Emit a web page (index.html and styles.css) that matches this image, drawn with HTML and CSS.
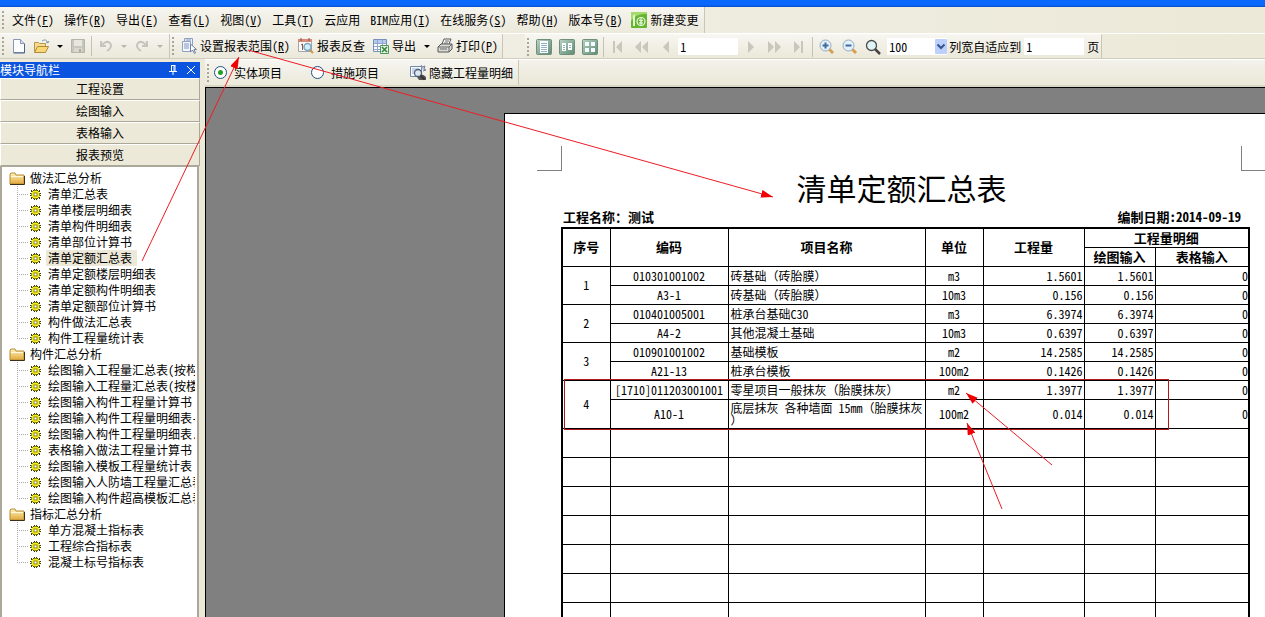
FILE: index.html
```html
<!DOCTYPE html>
<html lang="zh-CN">
<head>
<meta charset="utf-8">
<title>清单定额汇总表</title>
<link rel="stylesheet" href="styles.css">
</head>
<body>
<svg class="defs" aria-hidden="true">
  <defs>
    <linearGradient id="gold" x1="0" y1="0" x2="0" y2="1"><stop offset="0" stop-color="#fff3b8"/><stop offset="1" stop-color="#e3a83a"/></linearGradient>
    <linearGradient id="sage" x1="0" y1="0" x2="1" y2="1"><stop offset="0" stop-color="#b9d3c4"/><stop offset="1" stop-color="#5d8a72"/></linearGradient>
    <symbol id="gear" viewBox="0 0 11 11">
      <path d="M4 0h1v1h1V0h1v1h1v1h1V1h1v2H9v1h2v1h-1v1h1v1H9v1h1v2H9V9H8v1H7v1H6v-1H5v1H4v-1H3V9H2v1H1V8h1V7H0V6h1V5H0V4h2V3H1V1h1v1h1V1h1z" fill="#3a3a00"/>
      <circle cx="5.500" cy="5.500" r="4" fill="#f6f020"/><rect x="4" y="4" width="3" height="3" fill="#fff" stroke="#5c5c00" stroke-width=".7"/>
    </symbol>
    <symbol id="folder" viewBox="0 0 16 13">
      <path d="M1 2l1-1h4l1 2h8v9H1z" fill="url(#gold)" stroke="#b58a3c"/>
      <path d="M1 12.500h14.500V4" fill="none" stroke="#3c2f12"/><path d="M2 4.500h12" stroke="#fffbe0"/>
    </symbol>
    <marker id="tip" viewBox="0 0 12 8" refX="12" refY="4" markerWidth="12" markerHeight="8" markerUnits="userSpaceOnUse" orient="auto"><path d="M0 0l12 4-12 4z" fill="#f00000"/></marker>
  </defs>
</svg>

<div class="app">
  <header class="titlebar"></header>

  <nav class="menubar">
    <div class="strip menu">
      <i class="grip"></i>
      <button>文件(<u>F</u>)</button><button>操作(<u>R</u>)</button><button>导出(<u>E</u>)</button><button>查看(<u>L</u>)</button><button>视图(<u>V</u>)</button><button>工具(<u>T</u>)</button><button>云应用</button><button>BIM应用(<u>I</u>)</button><button>在线服务(<u>S</u>)</button><button>帮助(<u>H</u>)</button><button>版本号(<u>B</u>)</button>
      <button class="with-icon"><svg width="16" height="16" viewBox="0 0 16 16"><rect width="16" height="16" rx="1" fill="#65b530"/><path d="M0 9Q5 1 16 2V0H0z" fill="#a4dc6c"/><path d="M2 4l2-2v12H2z" fill="#e4f7d3"/><circle cx="10" cy="9.500" r="4" fill="none" stroke="#e9f8dc" stroke-width="1.200"/><path d="M8 8l2 1 2-1M10 6v7M8 11h4" stroke="#fff" fill="none"/></svg>新建变更</button>
    </div>
  </nav>

  <div class="toolbar">
    <div class="strip files">
      <i class="grip"></i>
      <button class="tool" aria-label="新建"><svg width="14" height="16" viewBox="0 0 14 16"><path d="M1.500 1.500h7l4 4v9h-11z" fill="#fbfdff" stroke="#8797b5"/><path d="M8.500 1.500v4h4" fill="#cddcf0" stroke="#8797b5"/><path d="M12.500 6v9h-11" fill="none" stroke="#4c6390"/></svg></button>
      <button class="tool" aria-label="打开"><svg width="17" height="16" viewBox="0 0 17 16"><path d="M1.500 13.500v-9h4l1 1h6v3" fill="#f6dc8c" stroke="#b89647"/><path d="M1.500 14.500l3-6h11l-3 6z" fill="#f8d774" stroke="#b08a3a"/><path d="M9 3q4-3 6 2m-2-1l2 1 1-2" fill="none" stroke="#8799ac"/></svg></button>
      <button class="caret" aria-label="打开选项"></button>
      <button class="tool" aria-label="保存" disabled><svg width="16" height="16" viewBox="0 0 16 16"><path d="M1.500 1.500h13v13h-13z" fill="#c8c7be" stroke="#b6b5ab"/><path d="M4 2h8v6H4z" fill="#e8e7df"/><path d="M4 10h8v4H4z" fill="#dad9d0"/><path d="M9 11h2v3H9z" fill="#adaca3"/></svg></button>
      <i class="sep"></i>
      <button class="tool" aria-label="撤销" disabled><svg width="14" height="14" viewBox="0 0 14 14"><path d="M2 2v5h5M3 6q4-5 8-2 3 4-3 8" fill="none" stroke="#c6c5bc" stroke-width="2"/></svg></button>
      <button class="caret" aria-label="撤销选项" disabled></button>
      <button class="tool" aria-label="恢复" disabled><svg width="14" height="14" viewBox="0 0 14 14"><path d="M12 2v5H7M11 6Q7 1 3 4q-3 4 3 8" fill="none" stroke="#c6c5bc" stroke-width="2"/></svg></button>
      <button class="caret" aria-label="恢复选项" disabled></button>
    </div>
    <div class="strip">
      <i class="grip"></i>
      <button class="with-icon"><svg width="16" height="16" viewBox="0 0 16 16"><path d="M3.500.500h8v10h-8z" fill="#eef3fb" stroke="#8fa1c3"/><path d="M1.500 3.500h8v10h-8z" fill="#f4f8fe" stroke="#8fa1c3"/><path d="M3 6h5M3 8h5M3 10h5M5 2h5" stroke="#7c92bd"/><path d="M9.500 6v8l2-2 2 3.500 1-.500-1.500-3.500H15.500z" fill="#fff" stroke="#6c80a6"/></svg><span>设置报表范围(<u>R</u>)</span></button>
      <button class="with-icon"><svg width="16" height="16" viewBox="0 0 16 16"><path d="M.500 1.500h13v12h-13z" fill="#fafafa" stroke="#a5a5a5"/><path d="M0 1h14v3H0z" fill="#d98a78"/><path d="M3 0v3M11 0v3" stroke="#8a4d40"/><path d="M3 7l1.500-1v6" fill="none" stroke="#8d5a4b"/><circle cx="9.500" cy="9" r="3.500" fill="#d4eefa" stroke="#78a7c4" stroke-width="1.500"/><path d="M12 12l3 3" stroke="#cb944c" stroke-width="2"/></svg><span>报表反查</span></button>
      <button class="with-icon"><svg width="16" height="16" viewBox="0 0 16 16"><path d="M.500 1.500h13v12h-13z" fill="#fff" stroke="#7991ba"/><path d="M1 2h12v3H1z" fill="#b3caef"/><path d="M1 5.500h12M1 8.500h12M1 11.500h7M4.500 2v11M9.500 2v6" stroke="#92a7cd"/><path d="M7.500 7.500h8v8h-8z" fill="#e2f2df" stroke="#509559"/><path d="M9 9l5 5M14 9l-5 5" stroke="#2f853d" stroke-width="1.500"/></svg><span>导出</span></button>
      <button class="caret" aria-label="导出选项"></button>
      <button class="with-icon"><svg width="16" height="16" viewBox="0 0 16 16"><path d="M5 6l2-5h7l-2 5" fill="#fff" stroke="#555"/><path d="M1 9l3-3h11v5l-3 3H1z" fill="#dcdcd8" stroke="#555"/><path d="M1 9h11v5M12 9l3-3M3 11h7M8 3h4M7 5h4" fill="none" stroke="#666"/></svg><span>打印(<u>P</u>)</span></button>
    </div>
    <div class="strip paging">
      <i class="grip"></i>
      <button class="tool" aria-label="单页"><svg width="16" height="16" viewBox="0 0 16 16"><rect x=".500" y=".500" width="15" height="15" rx="1" fill="url(#sage)" stroke="#6d8f7c"/><path d="M4 2h8v12H4z" fill="#fff"/><path d="M5 4.500h6M5 6.500h6M5 8.500h6M5 10.500h6M5 12.500h6" stroke="#8fb1c4"/></svg></button>
      <button class="tool" aria-label="双页"><svg width="16" height="16" viewBox="0 0 16 16"><rect x=".500" y=".500" width="15" height="15" rx="1" fill="url(#sage)" stroke="#6d8f7c"/><path d="M3 4h4v8H3zM9 4h4v7H9z" fill="#fff"/><path d="M4 6.500h2M4 8.500h2M4 10.500h2M10 6.500h2M10 8.500h2" stroke="#8fb1c4"/></svg></button>
      <button class="tool" aria-label="多页"><svg width="16" height="16" viewBox="0 0 16 16"><rect x=".500" y=".500" width="15" height="15" rx="1" fill="url(#sage)" stroke="#6d8f7c"/><path d="M3 3h4v4H3zM9 3h4v4H9zM3 9h4v4H3zM9 9h4v4H9z" fill="#f4fbff"/></svg></button>
      <i class="sep"></i>
      <button class="nav" aria-label="首页" disabled><svg width="10" height="12"><path d="M0 0h2v12H0zM9 0v12L3 6z"/></svg></button>
      <button class="nav" aria-label="快退" disabled><svg width="14" height="12"><path d="M6 0v12L0 6zM13 0v12L7 6z"/></svg></button>
      <button class="nav" aria-label="上一页" disabled><svg width="7" height="12"><path d="M6 0v12L0 6z"/></svg></button>
      <input class="field" type="text" value="1" aria-label="页码">
      <button class="nav" aria-label="下一页" disabled><svg width="7" height="12"><path d="M1 0v12l6-6z"/></svg></button>
      <button class="nav" aria-label="快进" disabled><svg width="14" height="12"><path d="M1 0v12l6-6zM8 0v12l6-6z"/></svg></button>
      <button class="nav" aria-label="末页" disabled><svg width="10" height="12"><path d="M1 0v12l6-6zM8 0h2v12H8z"/></svg></button>
      <i class="sep"></i>
      <button class="tool" aria-label="放大"><svg width="16" height="16" viewBox="0 0 16 16"><path d="M10 10l4 4" stroke="#d7a050" stroke-width="3"/><circle cx="6.500" cy="6.500" r="5.500" fill="#e4f1fc" stroke="#95a9bd"/><path d="M6.500 3.500v6M3.500 6.500h6" stroke="#3e6c9c" stroke-width="2"/></svg></button>
      <button class="tool" aria-label="缩小"><svg width="16" height="16" viewBox="0 0 16 16"><path d="M10 10l4 4" stroke="#d7a050" stroke-width="3"/><circle cx="6.500" cy="6.500" r="5.500" fill="#e4f1fc" stroke="#95a9bd"/><path d="M3.500 6.500h6" stroke="#3e6c9c" stroke-width="2"/></svg></button>
      <button class="tool" aria-label="缩放"><svg width="16" height="16" viewBox="0 0 16 16"><path d="M10 10l5 5" stroke="#444" stroke-width="2.500"/><circle cx="6.500" cy="6.500" r="5" fill="#e0f5f8" stroke="#4c4c4c" stroke-width="1.300"/></svg></button>
      <span class="zoom"><select class="field" aria-label="缩放比例"><option>100</option></select><svg width="12" height="15" viewBox="0 0 12 15" aria-hidden="true"><rect width="12" height="15" rx="1" fill="#bdd0fb"/><path d="M2.500 5.500L6 9l3.500-3.500" fill="none" stroke="#36548f" stroke-width="2"/></svg></span>
      <label class="fit">列宽自适应到<input class="field" type="text" value="1">页</label>
    </div>
  </div>

  <div class="body">
    <aside class="side">
      <div class="side-head"><span>模块导航栏</span>
        <button aria-label="固定"><svg width="8" height="10"><path d="M2 .500h4M2.500 0v6M5 0v6M6 0v6M0 6.500h8M4 6v4" stroke="#fff" fill="none"/></svg></button>
        <button aria-label="关闭"><svg width="8" height="8"><path d="M0 0l8 8M8 0L0 8" stroke="#fff"/></svg></button>
      </div>
      <button class="module">工程设置</button>
      <button class="module">绘图输入</button>
      <button class="module">表格输入</button>
      <button class="module">报表预览</button>
      <div class="tree">
        <div class="folder"><svg width="16" height="13"><use href="#folder"/></svg>做法汇总分析</div>
        <ul>
          <li><svg width="11" height="11"><use href="#gear"/></svg><span>清单汇总表</span></li>
          <li><svg width="11" height="11"><use href="#gear"/></svg><span>清单楼层明细表</span></li>
          <li><svg width="11" height="11"><use href="#gear"/></svg><span>清单构件明细表</span></li>
          <li><svg width="11" height="11"><use href="#gear"/></svg><span>清单部位计算书</span></li>
          <li><svg width="11" height="11"><use href="#gear"/></svg><span class="current">清单定额汇总表</span></li>
          <li><svg width="11" height="11"><use href="#gear"/></svg><span>清单定额楼层明细表</span></li>
          <li><svg width="11" height="11"><use href="#gear"/></svg><span>清单定额构件明细表</span></li>
          <li><svg width="11" height="11"><use href="#gear"/></svg><span>清单定额部位计算书</span></li>
          <li><svg width="11" height="11"><use href="#gear"/></svg><span>构件做法汇总表</span></li>
          <li><svg width="11" height="11"><use href="#gear"/></svg><span>构件工程量统计表</span></li>
        </ul>
        <div class="folder"><svg width="16" height="13"><use href="#folder"/></svg>构件汇总分析</div>
        <ul>
          <li><svg width="11" height="11"><use href="#gear"/></svg><span>绘图输入工程量汇总表(按构</span></li>
          <li><svg width="11" height="11"><use href="#gear"/></svg><span>绘图输入工程量汇总表(按楼</span></li>
          <li><svg width="11" height="11"><use href="#gear"/></svg><span>绘图输入构件工程量计算书</span></li>
          <li><svg width="11" height="11"><use href="#gear"/></svg><span>绘图输入构件工程量明细表-</span></li>
          <li><svg width="11" height="11"><use href="#gear"/></svg><span>绘图输入构件工程量明细表.</span></li>
          <li><svg width="11" height="11"><use href="#gear"/></svg><span>表格输入做法工程量计算书</span></li>
          <li><svg width="11" height="11"><use href="#gear"/></svg><span>绘图输入模板工程量统计表</span></li>
          <li><svg width="11" height="11"><use href="#gear"/></svg><span>绘图输入人防墙工程量汇总表</span></li>
          <li><svg width="11" height="11"><use href="#gear"/></svg><span>绘图输入构件超高模板汇总表</span></li>
        </ul>
        <div class="folder"><svg width="16" height="13"><use href="#folder"/></svg>指标汇总分析</div>
        <ul>
          <li><svg width="11" height="11"><use href="#gear"/></svg><span>单方混凝土指标表</span></li>
          <li><svg width="11" height="11"><use href="#gear"/></svg><span>工程综合指标表</span></li>
          <li><svg width="11" height="11"><use href="#gear"/></svg><span>混凝土标号指标表</span></li>
        </ul>
      </div>
    </aside>

    <main class="main">
      <div class="options">
        <div class="strip">
          <i class="grip"></i>
          <label><input type="radio" name="kind" checked>实体项目</label>
          <label><input type="radio" name="kind">措施项目</label>
          <button class="with-icon"><svg width="16" height="16" viewBox="0 0 16 16"><path d="M.500 1.500h11v10h-11z" fill="#f4f8ff" stroke="#7487ad"/><path d="M2 4h7M2 6h5M2 8h4" stroke="#9cafd3"/><path d="M11 0l1 2 3-1-1 3 2 1-3 1" fill="#bccbe3" stroke="#71839f"/><path d="M7 12q5-5 9 0v3H9z" fill="#555"/><circle cx="8" cy="8" r="3.500" fill="#dbe7f2" stroke="#54606f" stroke-width="1.300"/><path d="M10.500 10.500l4 4" stroke="#333" stroke-width="2"/></svg><span>隐藏工程量明细</span></button>
        </div>
      </div>
      <div class="canvas">
        <article class="paper">
          <div class="corners"><i></i><i></i></div>
          <h1>清单定额汇总表</h1>
          <div class="meta"><span>工程名称：测试</span><span>编制日期:2014-09-19</span></div>
          <table>
            <colgroup><col class="c-no"><col class="c-code"><col class="c-name"><col class="c-unit"><col class="c-qty"><col class="c-draw"><col class="c-form"></colgroup>
            <thead>
              <tr><th rowspan="2">序号</th><th rowspan="2">编码</th><th rowspan="2">项目名称</th><th rowspan="2">单位</th><th rowspan="2">工程量</th><th colspan="2">工程量明细</th></tr>
              <tr><th>绘图输入</th><th>表格输入</th></tr>
            </thead>
            <tbody>
              <tr><td rowspan="2">1</td><td>010301001002</td><td class="name">砖基础（砖胎膜）</td><td>m3</td><td class="num">1.5601</td><td class="num">1.5601</td><td class="num last">0</td></tr>
              <tr><td>A3-1</td><td class="name">砖基础（砖胎膜）</td><td>10m3</td><td class="num">0.156</td><td class="num">0.156</td><td class="num last">0</td></tr>
              <tr><td rowspan="2">2</td><td>010401005001</td><td class="name">桩承台基础C30</td><td>m3</td><td class="num">6.3974</td><td class="num">6.3974</td><td class="num last">0</td></tr>
              <tr><td>A4-2</td><td class="name">其他混凝土基础</td><td>10m3</td><td class="num">0.6397</td><td class="num">0.6397</td><td class="num last">0</td></tr>
              <tr><td rowspan="2">3</td><td>010901001002</td><td class="name">基础模板</td><td>m2</td><td class="num">14.2585</td><td class="num">14.2585</td><td class="num last">0</td></tr>
              <tr><td>A21-13</td><td class="name">桩承台模板</td><td>100m2</td><td class="num">0.1426</td><td class="num">0.1426</td><td class="num last">0</td></tr>
              <tr><td rowspan="2">4</td><td>[1710]011203001001</td><td class="name">零星项目一般抹灰（胎膜抹灰）</td><td>m2</td><td class="num">1.3977</td><td class="num">1.3977</td><td class="num last">0</td></tr>
              <tr class="tall"><td>A10-1</td><td class="name">底层抹灰 各种墙面 15mm（胎膜抹灰）</td><td>100m2</td><td class="num">0.014</td><td class="num">0.014</td><td class="num last">0</td></tr>
              <tr class="tall"><td></td><td></td><td></td><td></td><td></td><td></td><td></td></tr>
              <tr class="tall"><td></td><td></td><td></td><td></td><td></td><td></td><td></td></tr>
              <tr class="tall"><td></td><td></td><td></td><td></td><td></td><td></td><td></td></tr>
              <tr class="tall"><td></td><td></td><td></td><td></td><td></td><td></td><td></td></tr>
              <tr class="tall"><td></td><td></td><td></td><td></td><td></td><td></td><td></td></tr>
              <tr class="tall"><td></td><td></td><td></td><td></td><td></td><td></td><td></td></tr>
              <tr class="tall"><td></td><td></td><td></td><td></td><td></td><td></td><td></td></tr>
            </tbody>
          </table>
        </article>
      </div>
    </main>
  </div>
</div>

<svg class="notes" aria-hidden="true">
  <g fill="none" stroke="#ee1c24">
    <path d="M248 50L773 197" marker-end="url(#tip)"/>
    <path d="M142 261L239 57" marker-end="url(#tip)"/>
    <path d="M1052 465L966 393" marker-end="url(#tip)"/>
    <path d="M1002 509L967 423" marker-end="url(#tip)"/>
    <rect x="564.500" y="379.500" width="604" height="50" stroke="#b0181e"/>
  </g>
</svg>
</body>
</html>
```

FILE: styles.css
```css
* { box-sizing: border-box; }

body {
  margin: 0;
  overflow: hidden;
  background: #ece9d8;
  color: #000;
  font: 12px/16px "Noto Sans Mono CJK SC", "Noto Sans CJK SC", monospace;
}

button, input, select { font: inherit; color: inherit; }

button {
  display: flex;
  align-items: center;
  justify-content: center;
  margin: 0;
  padding: 0;
  border: 0;
  background: none;
  white-space: nowrap;
}

svg { flex: none; display: block; }

.defs { position: absolute; width: 0; height: 0; }

.notes {
  position: absolute;
  inset: 0;
  width: 100%;
  height: 100%;
  pointer-events: none;
}

.app { display: flex; flex-direction: column; height: 100vh; }

.titlebar {
  flex: none;
  height: 7px;
  background: linear-gradient(#0a68fc 5px, #0b4cc4);
}

.menubar, .toolbar {
  flex: none;
  display: flex;
  height: 26px;
  background: linear-gradient(90deg, #f2f1ea, #ece9d8);
}

.toolbar { border-top: 1px solid #fff; border-bottom: 1px solid #d0cdbc; }

.strip {
  display: flex;
  align-items: center;
  border-right: 1px solid #c9c6b5;
  background: linear-gradient(#f6f5f0, #ebe9da);
}

.grip {
  flex: none;
  width: 2px;
  height: 18px;
  margin: 0 3px 0 2px;
  background: repeating-linear-gradient(#a9a695 0 2px, transparent 2px 4px);
}

.menu button { padding: 0 5px; }
.menu .with-icon { padding: 0 5px 0 4px; }

.with-icon { gap: 3px; padding: 0 4px; }
.tool { width: 23px; }
.nav { width: 24px; }
.nav path { fill: #c9c7bb; }

.caret { width: 13px; height: 20px; }
.caret::before {
  content: "";
  border: 3px solid transparent;
  border-top-color: #000;
  border-bottom: 0;
}
.caret:disabled::before { border-top-color: #b9b7aa; }

.sep { width: 1px; height: 20px; margin: 0 2px; background: #c5c2b2; }

.files { padding-right: 3px; }
.paging { margin-left: 22px; border-top: 1px solid #f8f7f2; }

.field {
  width: 60px;
  height: 17px;
  padding: 0 2px;
  border: 0;
  border-radius: 0;
  background: #fff;
  appearance: none;
}

.zoom { display: grid; align-items: center; justify-items: end; margin: 0 2px 0 3px; }
.zoom > * { grid-area: 1 / 1; }
.zoom svg { pointer-events: none; }

.fit { display: flex; align-items: center; gap: 3px; padding-right: 2px; white-space: nowrap; }

.body { flex: 1; display: flex; min-height: 0; }

.side {
  flex: none;
  display: flex;
  flex-direction: column;
  width: 200px;
  padding-top: 3px;
}

.side-head {
  display: flex;
  align-items: center;
  gap: 10px;
  height: 16px;
  padding-right: 5px;
  background: #0a54e0;
  color: #fff;
}
.side-head span { flex: 1; }

.module {
  flex: none;
  height: 22px;
  border: 1px solid #aca899;
  border-top-color: #fff;
  border-left-color: #fff;
  background: #ece9d8;
}

.tree {
  flex: 1;
  min-height: 0;
  overflow: hidden;
  margin-right: 1px;
  padding: 3px 2px 0 7px;
  border: 2px solid #aca899;
  border-top-width: 1px;
  border-bottom: 0;
  background: #fff;
  white-space: nowrap;
}

.folder { display: flex; align-items: center; gap: 5px; height: 16px; }

.tree ul {
  margin: 0;
  padding: 0 0 0 8px;
  overflow: hidden;
  list-style: none;
}

.tree li {
  display: flex;
  align-items: center;
  gap: 5px;
  height: 16px;
  background:
    repeating-linear-gradient(90deg, #aaa 0 1px, transparent 1px 2px) 0 8px / 12px 1px no-repeat,
    repeating-linear-gradient(#aaa 0 1px, transparent 1px 2px) 0 0 / 1px 100% no-repeat;
  padding-left: 13px;
}
.tree li:last-child {
  background:
    repeating-linear-gradient(90deg, #aaa 0 1px, transparent 1px 2px) 0 8px / 12px 1px no-repeat,
    repeating-linear-gradient(#aaa 0 1px, transparent 1px 2px) 0 0 / 1px 8px no-repeat;
}
.tree li span { padding: 0 2px; }
.tree .current { padding-right: 5px; background: #ece9d8; }

.main { flex: 1; display: flex; flex-direction: column; min-width: 0; padding-left: 5px; }

.options {
  flex: none;
  display: flex;
  height: 28px;
  border-top: 1px solid #fff;
  border-bottom: 2px solid #d9d6c6;
  background: linear-gradient(#f3f2eb, #ebe8d7);
}

.options .strip { padding-right: 1px; }
.options label { display: flex; align-items: center; gap: 7px; margin: 0 27px 0 2px; }
.options input {
  width: 13px;
  height: 13px;
  margin: 0;
  border: 1px solid #1d5281;
  border-radius: 50%;
  background: #fff;
  appearance: none;
}
.options input:checked { background: radial-gradient(circle, #21a121 0 2px, #fff 3px); }

.canvas {
  flex: 1;
  min-height: 0;
  overflow: hidden;
  padding: 25px 0 0 298px;
  border: solid #000;
  border-width: 1px 0 0 1px;
  background: #808080;
}

.paper {
  width: max-content;
  padding: 32px 32px 60px;
  border: 1px solid #000;
  background: #fff;
}

.corners { display: flex; justify-content: space-between; height: 25px; }
.corners i { width: 25px; border: 1px solid #808080; border-width: 0 1px 1px 0; }
.corners i:last-child { border-width: 0 0 1px 1px; }

.paper h1 {
  margin: 0 0 6px;
  font-size: 30px;
  line-height: 32px;
  font-weight: 400;
  text-align: center;
}

.meta {
  display: flex;
  justify-content: space-between;
  padding: 0 25px 2px 26px;
  font-size: 13px;
  line-height: 16px;
  font-weight: 700;
}

.paper table {
  width: 688px;
  margin: 0 16px 0 24px;
  border: 2px solid #000;
  border-collapse: collapse;
  table-layout: fixed;
}

.c-no { width: 48px; }
.c-code { width: 118px; }
.c-name { width: 197px; }
.c-unit { width: 58px; }
.c-qty { width: 101px; }
.c-draw { width: 71px; }
.c-form { width: 94px; }

.paper tr { height: 19px; }
.paper tr.tall { height: 29px; }

th, td {
  padding: 0;
  border: 1px solid #000;
  line-height: 12px;
  text-align: center;
}
th { font-size: 13px; }
td.name { padding-left: 2px; text-align: left; line-break: anywhere; }
td.num { padding-right: 1px; text-align: right; }
td.last { padding-right: 0; }
```
